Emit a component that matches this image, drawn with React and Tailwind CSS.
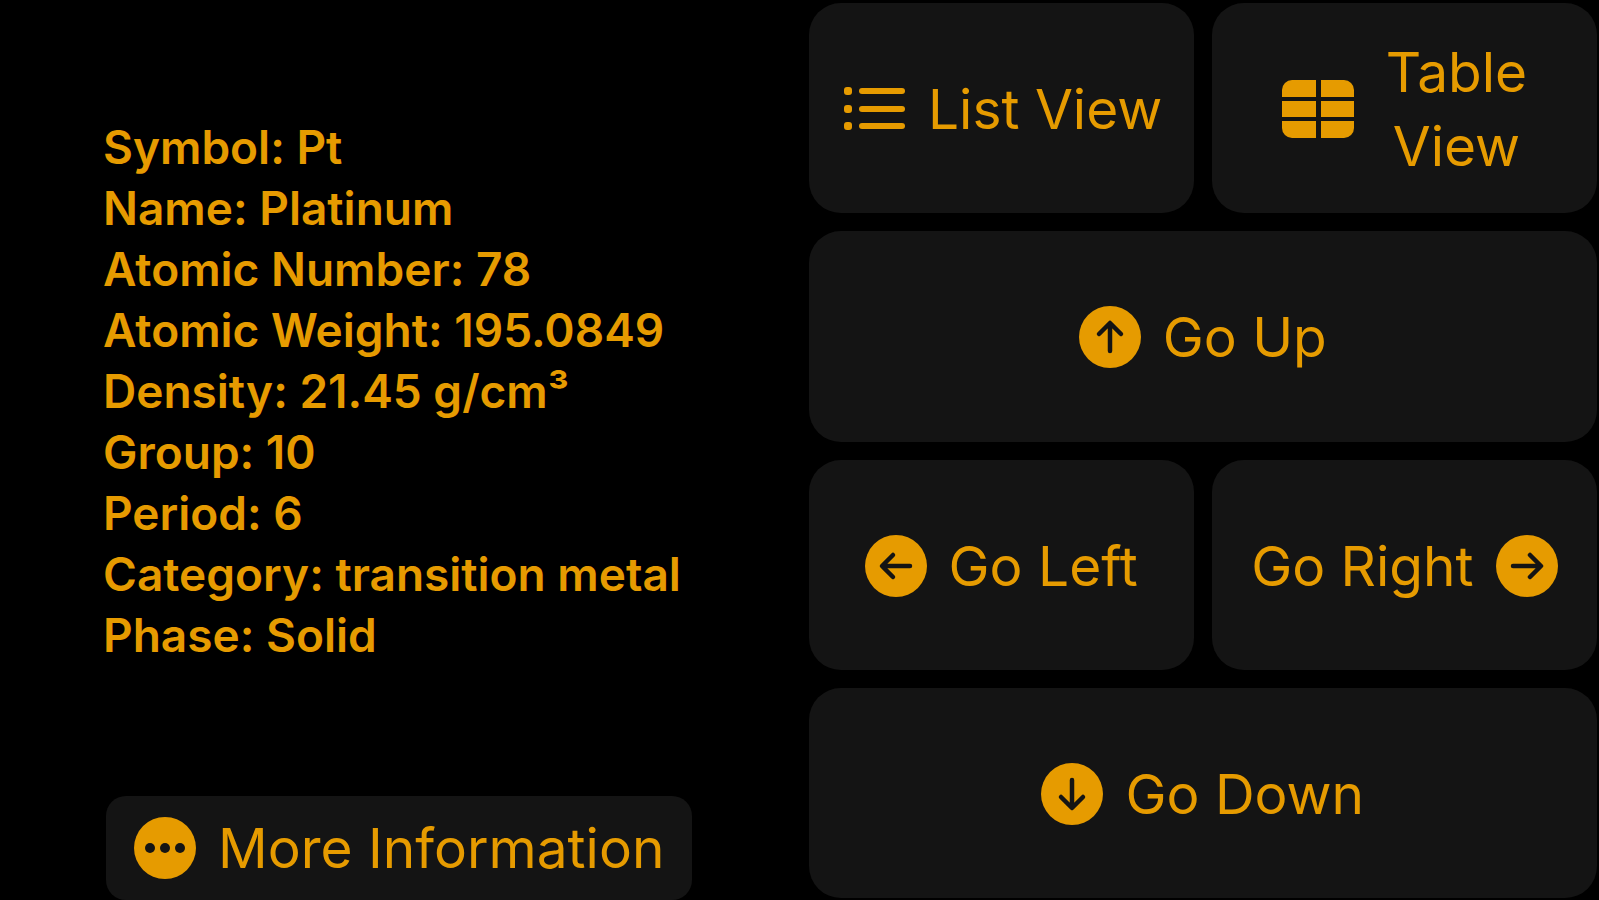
import React from 'react';

const details = [
    ['Symbol', 'Pt'],
    ['Name', 'Platinum'],
    ['Atomic Number', '78'],
    ['Atomic Weight', '195.0849'],
    ['Density', '21.45 g/cm³'],
    ['Group', '10'],
    ['Period', '6'],
    ['Category', 'transition metal'],
    ['Phase', 'Solid'],
];

const ListIcon = () => (
    <svg className="w-[62px] h-[46px] shrink-0" viewBox="0 0 62 46" fill="currentColor" aria-hidden="true">
        {[1, 19, 36].map((y) => (
            <g key={y}>
                <rect x="0" y={y} width="8" height="8" rx="3" />
                <rect x="15" y={y + 1} width="46" height="6" rx="3" />
            </g>
        ))}
    </svg>
);

const TableIcon = () => (
    <svg className="w-[72px] h-[58px] shrink-0" viewBox="0 0 72 58" fill="currentColor" aria-hidden="true">
        <path d="M10 0H34V17H0V10A10 10 0 0 1 10 0Z" />
        <path d="M39 0H62A10 10 0 0 1 72 10V17H39Z" />
        <path d="M0 21H34V37H0Z" />
        <path d="M39 21H72V37H39Z" />
        <path d="M0 41H34V58H10A10 10 0 0 1 0 48Z" />
        <path d="M39 41H72V48A10 10 0 0 1 62 58H39Z" />
    </svg>
);

const arrows = {
    up: 'M31 45V18M20 28L31 17L42 28',
    down: 'M31 17V44M20 34L31 45L42 34',
    left: 'M45 31H18M28 20L17 31L28 42',
    right: 'M17 31H44M34 20L45 31L34 42',
};

const ArrowIcon = ({ direction }) => (
    <svg className="w-[62px] h-[62px] shrink-0" viewBox="0 0 62 62" fill="none" aria-hidden="true">
        <circle cx="31" cy="31" r="31" fill="currentColor" />
        <path d={arrows[direction]} stroke="#141414" strokeWidth="4.5" strokeLinecap="round" strokeLinejoin="round" />
    </svg>
);

const MoreIcon = () => (
    <svg className="w-[62px] h-[62px] shrink-0" viewBox="0 0 62 62" aria-hidden="true">
        <circle cx="31" cy="31" r="31" fill="currentColor" />
        {[16, 31, 46].map((x) => (
            <circle key={x} cx={x} cy="31" r="5" fill="#141414" />
        ))}
    </svg>
);

const PadButton = ({ className = 'gap-[22px]', children }) => (
    <button
        type="button"
        className={`flex items-center justify-center rounded-[32px] bg-[#141414] text-[55px] leading-[74px] pt-[2px] ${className}`}
    >
        {children}
    </button>
);

const App = () => (
    <div className="flex min-h-screen bg-black text-[#e69b00] font-['Inter','Liberation_Sans',sans-serif]">
        <section className="w-1/2 flex flex-col items-start pl-[103px]">
            <ul className="flex-1 pt-[117px] text-[46px] leading-[61px] font-semibold whitespace-nowrap">
                {details.map(([label, value]) => (
                    <li key={label}>{label}: {value}</li>
                ))}
            </ul>
            <button
                type="button"
                className="ml-[3px] flex items-center gap-[22px] h-[104px] px-[28px] rounded-[20px] bg-[#141414] text-[55px] leading-[74px] whitespace-nowrap"
            >
                <MoreIcon />
                More Information
            </button>
        </section>
        <nav className="w-1/2 grid grid-cols-2 grid-rows-4 gap-[18px] pl-[9px] pr-[2px] pt-[3px] pb-[2px]">
            <PadButton className="gap-[22px] pl-[4px]">
                <ListIcon />
                List View
            </PadButton>
            <PadButton className="gap-[32px]">
                <TableIcon />
                <span>Table<br />View</span>
            </PadButton>
            <PadButton className="col-span-2 gap-[22px]">
                <ArrowIcon direction="up" />
                Go Up
            </PadButton>
            <PadButton>
                <ArrowIcon direction="left" />
                Go Left
            </PadButton>
            <PadButton>
                Go Right
                <ArrowIcon direction="right" />
            </PadButton>
            <PadButton className="col-span-2 gap-[22px]">
                <ArrowIcon direction="down" />
                Go Down
            </PadButton>
        </nav>
    </div>
);

export default App;
